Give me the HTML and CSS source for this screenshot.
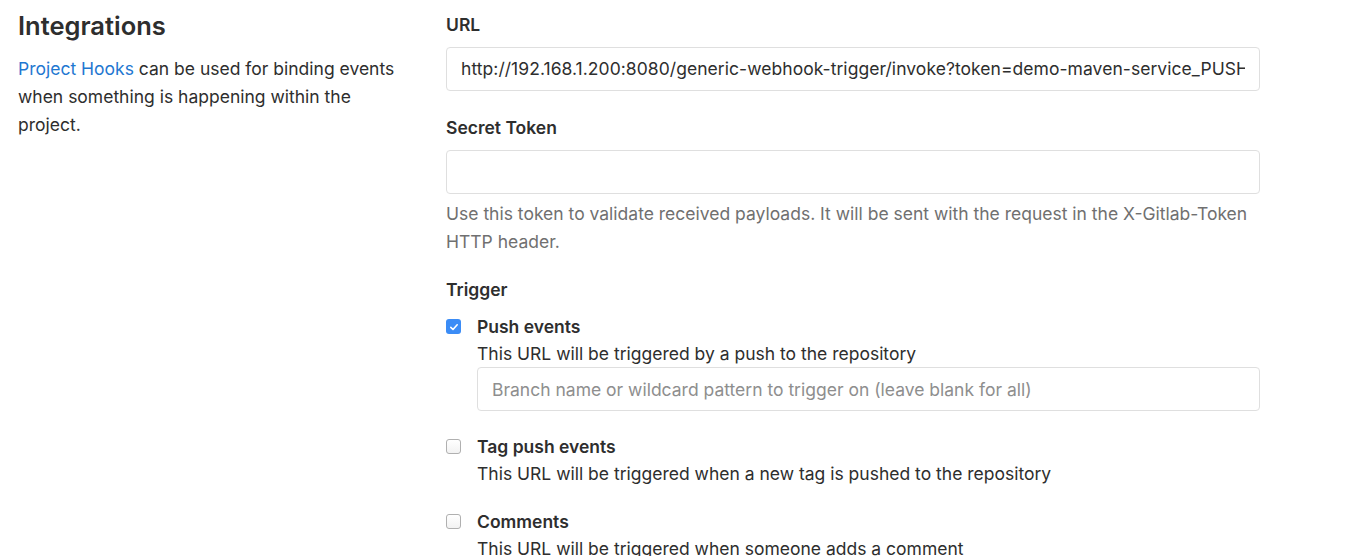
FILE: index.html
```html
<!DOCTYPE html>
<html>
<head>
<meta charset="utf-8">
<link rel="stylesheet" href="styles.css">
</head>
<body>
<div class="page">
  <aside class="intro">
    <h2 class="title">Integrations</h2>
    <p class="lead"><a class="link" href="#">Project Hooks</a> can be used for binding events when something is happening within the project.</p>
  </aside>
  <form class="form">
    <div class="field">
      <label class="label">URL</label>
      <div class="input"><span class="value">http://192.168.1.200:8080/generic-webhook-trigger/invoke?token=demo-maven-service_PUSH_TOKEN</span></div>
    </div>
    <div class="field">
      <label class="label">Secret Token</label>
      <div class="input"></div>
      <p class="help">Use this token to validate received payloads. It will be sent with the request in the X-Gitlab-Token HTTP header.</p>
    </div>
    <div class="field trigger">
      <label class="label">Trigger</label>
      <div class="item">
        <span class="check checked"><svg viewBox="0 0 14 14" width="14" height="14"><path d="M3.8 7.4 L6 9.5 L10.2 4.8" fill="none" stroke="#fff" stroke-width="1.6" stroke-linecap="round" stroke-linejoin="round"/></svg></span>
        <div class="item-body">
          <div class="item-title">Push events</div>
          <div class="item-desc">This URL will be triggered by a push to the repository</div>
          <div class="input sub"><span class="placeholder">Branch name or wildcard pattern to trigger on (leave blank for all)</span></div>
        </div>
      </div>
      <div class="item">
        <span class="check"></span>
        <div class="item-body">
          <div class="item-title">Tag push events</div>
          <div class="item-desc">This URL will be triggered when a new tag is pushed to the repository</div>
        </div>
      </div>
      <div class="item">
        <span class="check"></span>
        <div class="item-body">
          <div class="item-title">Comments</div>
          <div class="item-desc">This URL will be triggered when someone adds a comment</div>
        </div>
      </div>
    </div>
  </form>
</div>
</body>
</html>
```
FILE: styles.css
```css
html, body {
  margin: 0;
  padding: 0;
  background: #fff;
}
body {
  font-family: Inter, "Liberation Sans", Arial, sans-serif;
  font-size: 17.5px;
  color: #2e2e2e;
  line-height: 28px;
  overflow: hidden;
  height: 556px;
}
.page {
  display: flex;
  padding-left: 18px;
}
.intro {
  width: 390px;
  flex: none;
}
.title {
  font-size: 25.5px;
  font-weight: 600;
  margin: 11px 0 0;
  line-height: 30px;
  color: #2e2e2e;
}
.lead {
  margin: 14px 0 0;
  line-height: 28px;
}
.link {
  color: #1f78d1;
  text-decoration: none;
}
.form {
  margin-left: 38px;
  width: 814px;
  flex: none;
  padding-top: 11px;
}
.label {
  display: block;
  font-weight: 600;
  line-height: 28px;
}
.field + .field {
  margin-top: 23px;
}
.input {
  margin-top: 8px;
  box-sizing: border-box;
  height: 44px;
  border: 1px solid #dfdfdf;
  border-radius: 4px;
  padding: 0 14px;
  display: flex;
  align-items: center;
  overflow: hidden;
  white-space: nowrap;
}
.value {
  color: #2e2e2e;
  overflow: hidden;
  letter-spacing: 0.05px;
}
.help {
  margin: 6px 0 0;
  color: #707070;
  line-height: 28px;
}
.field.trigger {
  margin-top: 20px;
}
.item {
  display: flex;
  margin-top: 9px;
}
.item + .item {
  margin-top: 22px;
}
.item + .item + .item {
  margin-top: 21px;
}
.check {
  flex: none;
  box-sizing: border-box;
  width: 15px;
  height: 15px;
  margin-top: 6px;
  margin-right: 16px;
  border: 1px solid #b0b0b0;
  border-radius: 3px;
  background: linear-gradient(#fff, #f2f2f2);
  display: flex;
  align-items: center;
  justify-content: center;
}
.check.checked {
  border: none;
  background: #3b8cf6;
}
.item-body {
  flex: 1;
  line-height: 27px;
}
.item-title {
  font-weight: 600;
}
.input.sub {
  margin-top: 0;
  height: 44px;
}
.placeholder {
  color: #8e8e8e;
  overflow: hidden;
}
```
